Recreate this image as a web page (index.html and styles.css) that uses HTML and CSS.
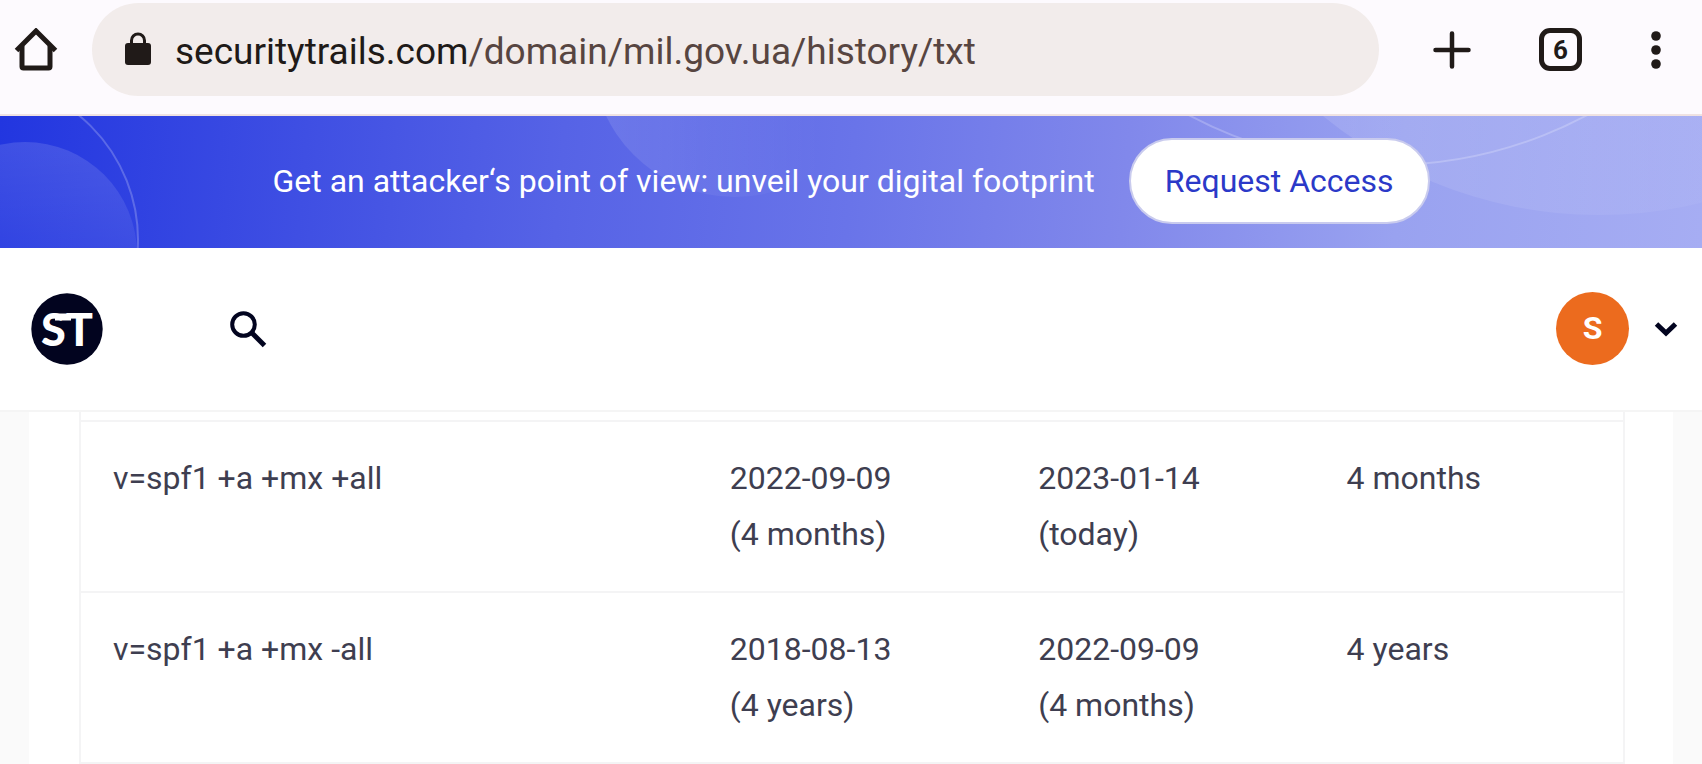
FILE: index.html
```html
<!DOCTYPE html>
<html lang="en">
<head>
<meta charset="utf-8">
<meta name="viewport" content="width=device-width, initial-scale=1">
<title>mil.gov.ua TXT history</title>
<link rel="stylesheet" href="styles.css">
</head>
<body>
<div class="toolbar">
  <button class="icon-btn" type="button" aria-label="Home">
    <svg width="44" height="44" viewBox="0 0 44 44" fill="none" stroke="#201a18" stroke-width="5" stroke-linejoin="round"><path d="M2.500 22.500 22 3l19.500 19.500" stroke-linejoin="miter"/><path d="M8 18v20.500a1.500 1.500 0 0 0 1.500 1.500h25a1.500 1.500 0 0 0 1.500-1.500V18"/></svg>
  </button>
  <div class="address">
    <svg class="lock" width="26" height="36" viewBox="0 0 26 36"><rect y="11" width="26" height="22" rx="3" fill="#201a18"/><path d="M6.500 12V8.500a6.500 6.500 0 0 1 13 0V12" fill="none" stroke="#201a18" stroke-width="3"/></svg>
    <div class="url" role="textbox" aria-label="Address" contenteditable="true" spellcheck="false">securitytrails.com<span class="url-path">/domain/mil.gov.ua/history/txt</span></div>
  </div>
  <div class="actions">
    <button class="icon-btn" type="button" aria-label="New tab">
      <svg width="38" height="38" viewBox="0 0 38 38" stroke="#201a18" stroke-width="4.500" stroke-linecap="round"><path d="M19 2.500v33M2.500 19h33"/></svg>
    </button>
    <button class="tabs-btn" type="button" aria-label="6 open tabs">6</button>
    <button class="icon-btn" type="button" aria-label="Menu">
      <svg width="12" height="40" viewBox="0 0 12 40" fill="#201a18"><circle cx="6" cy="6" r="4.800"/><circle cx="6" cy="20" r="4.800"/><circle cx="6" cy="34" r="4.800"/></svg>
    </button>
  </div>
</div>

<div class="banner">
  <svg class="banner-art" viewBox="0 0 1702 132" preserveAspectRatio="xMidYMid slice" aria-hidden="true">
    <defs>
      <linearGradient id="g1" x1="0" y1="0" x2="0" y2="1"><stop offset="0" stop-color="#fff" stop-opacity=".13"/><stop offset=".5" stop-color="#fff" stop-opacity=".06"/></linearGradient>
      <linearGradient id="g2" x1="0" y1="0" x2="1" y2="0"><stop offset="0" stop-color="#fff" stop-opacity=".12"/><stop offset=".8" stop-color="#fff" stop-opacity="0"/></linearGradient>
      <linearGradient id="g3" x1="0" y1="0" x2="1" y2="0"><stop offset=".15" stop-color="#fff" stop-opacity=".12"/><stop offset=".7" stop-color="#fff" stop-opacity=".03"/></linearGradient>
    </defs>
    <circle cx="25" cy="138" r="112" fill="url(#g1)"/>
    <circle cx="-23" cy="124" r="161" fill="none" stroke="#fff" stroke-opacity=".22" stroke-width="2"/>
    <circle cx="735" cy="-62" r="143" fill="url(#g2)"/>
    <circle cx="1388" cy="-373" r="422" fill="none" stroke="#fff" stroke-opacity=".22" stroke-width="2"/>
    <circle cx="1599" cy="-335" r="434" fill="url(#g3)"/>
  </svg>
  <p class="banner-text">Get an attacker‘s point of view: unveil your digital footprint</p>
  <a class="banner-cta" href="#">Request Access</a>
</div>

<header class="site-header">
  <a class="logo" href="#" aria-label="SecurityTrails">
    <svg width="72" height="72" viewBox="0 0 72 72"><circle cx="36" cy="36" r="35.700" fill="#02041f"/><text class="logo-text" x="36" y="53" text-anchor="middle">ST</text><path d="M24 20.500h16v7H24z" fill="#fff"/></svg>
  </a>
  <button class="search" type="button" aria-label="Search">
    <svg width="38" height="38" viewBox="0 0 38 38" fill="none" stroke="#02041f"><circle cx="14.500" cy="14.500" r="11.300" stroke-width="4"/><path d="m23 23 12.500 12.500" stroke-width="5"/></svg>
  </button>
  <button class="account" type="button" aria-label="Account">
    <span class="avatar">S</span>
    <svg width="24" height="16" viewBox="0 0 24 16" fill="none" stroke="#02041f" stroke-width="5"><path d="m2.500 3 9.500 9 9.500-9"/></svg>
  </button>
</header>

<main class="page">
  <div class="card">
    <div class="table-frame">
      <table class="records">
        <tbody>
          <tr><td>v=spf1 +a +mx +all</td><td>2022-09-09<br>(4 months)</td><td>2023-01-14<br>(today)</td><td>4 months</td></tr>
          <tr><td>v=spf1 +a +mx -all</td><td>2018-08-13<br>(4 years)</td><td>2022-09-09<br>(4 months)</td><td>4 years</td></tr>
        </tbody>
      </table>
    </div>
  </div>
</main>
</body>
</html>
```
FILE: styles.css
```css
* { box-sizing: border-box; }

body {
  margin: 0;
  font-family: Roboto, "Liberation Sans", sans-serif;
  font-size: 32px;
  color: #3e3e50;
  background: #fff;
}

button {
  padding: 0;
  border: 0;
  background: none;
  font: inherit;
  color: inherit;
}

svg { display: block; }

.toolbar {
  display: flex;
  align-items: center;
  gap: 34px;
  padding: 3px 40px 18px 14px;
  background: #fdfafe;
  border-bottom: 2px solid #efe2e2;
}

.address {
  flex: 1;
  display: flex;
  align-items: center;
  gap: 24px;
  min-width: 0;
  padding: 0 33px;
  height: 93px;
  border-radius: 47px;
  background: #f2eceb;
}

.url {
  padding-top: 4px;
  font-size: 37px;
  line-height: 48px;
  white-space: nowrap;
  outline: 0;
  color: #201a18;
}

.url-path { color: #574541; }

.actions {
  display: flex;
  align-items: center;
  gap: 68px;
  padding-left: 20px;
}

.tabs-btn {
  width: 43px;
  height: 43px;
  border: 5px solid #201a18;
  border-radius: 11px;
  font-size: 26px;
  font-weight: 700;
  line-height: 32px;
  color: #201a18;
}

.banner {
  position: relative;
  display: flex;
  align-items: center;
  justify-content: center;
  gap: 34px;
  padding: 22px 24px 24px;
  overflow: hidden;
  background: linear-gradient(95deg, #2236e0 0%, #3f4fe3 18%, #5663e6 33%, #6974e9 50%, #8188eb 66%, #99a2f0 82%, #a6adf3 100%);
}

.banner-art {
  position: absolute;
  inset: 0;
  width: 100%;
  height: 100%;
}

.banner-text {
  position: relative;
  margin: 0;
  color: #fff;
}

.banner-cta {
  position: relative;
  padding: 0 34px;
  border: 2px solid #c9cbee;
  border-radius: 43px;
  background: #fff;
  color: #2b39c8;
  line-height: 82px;
  text-decoration: none;
}

.site-header {
  display: flex;
  align-items: center;
  padding: 44px 24px 45px 31px;
  border-bottom: 2px solid #f5f5f5;
}

.logo-text {
  font-family: Lato, sans-serif;
  font-size: 45px;
  font-weight: 900;
  fill: #fff;
}

.search { margin-left: 126px; }

.account {
  display: flex;
  align-items: center;
  gap: 25px;
  margin-left: auto;
}

.avatar {
  width: 73px;
  height: 73px;
  border-radius: 50%;
  background: #ec6b1e;
  color: #fff;
  font-weight: 700;
  line-height: 72px;
  text-align: center;
}

.page {
  padding: 0 29px;
  background: #fafafa;
}

.card {
  padding: 0 48px 0 50px;
  background: #fff;
}

.table-frame {
  padding-top: 8px;
  border: solid #f4f4f5;
  border-width: 0 2px;
}

.records {
  width: 100%;
  table-layout: fixed;
  border-collapse: collapse;
  line-height: 56px;
}

.records td {
  width: 20%;
  padding: 28px 32px 29px;
  border: solid #f4f4f5;
  border-width: 2px 0;
  vertical-align: top;
}

.records td:first-child { width: 40%; }
```
